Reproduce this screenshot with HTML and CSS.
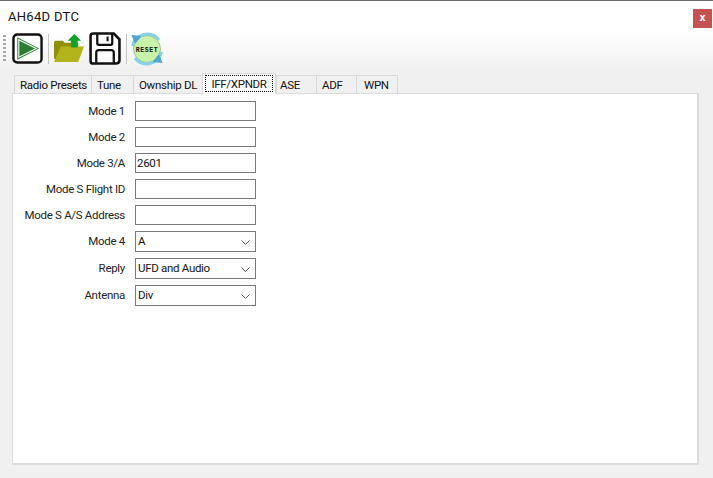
FILE: index.html
```html
<!DOCTYPE html>
<html lang="en">
<head>
<meta charset="utf-8">
<title>AH64D DTC</title>
<link rel="stylesheet" href="styles.css">
</head>
<body>
<div class="window">
  <header class="titlebar">
    <span class="title">AH64D DTC</span>
    <button class="close">x</button>
  </header>
  <div class="toolbar">
    <span class="grip"></span>
    <svg class="icon play" viewBox="0 0 32 32">
      <rect x="1.5" y="1.5" width="29" height="29" rx="4" fill="#fff" stroke="#111" stroke-width="2.5"/>
      <path d="M5.5 4.5 L28 16 L5.5 27.5 Z" fill="#2c7d32"/>
      <path d="M7 7 L25 16 L7 25 Z" fill="none" stroke="#fff" stroke-width="1.1"/>
      <path d="M9 10 L21 16 L9 22 Z" fill="#2c7d32"/>
    </svg>
    <span class="sep"></span>
    <svg class="icon folder" viewBox="0 0 34 32">
      <path d="M2 10 Q2 8 4 8 H11 L13 10 H27 V28 H4 L2 26 Z" fill="#8f8f0c"/>
      <path d="M9 14 H33 L27 30 H2 Z" fill="#b3b31c"/>
      <path d="M23 1 L30 8 H26.5 V15 H19.5 V8 H16 Z" fill="#10a32a"/>
    </svg>
    <svg class="icon floppy" viewBox="0 0 32 32">
      <path d="M2.5 4 Q2.5 1.5 5 1.5 H25 L30.5 7 V27.5 Q30.5 30.5 27.5 30.5 H5 Q2.5 30.5 2.5 28 Z" fill="#fff" stroke="#111" stroke-width="2.5"/>
      <path d="M9 2 V11 Q9 12.5 10.5 12.5 H22 Q23.500 12.500 23.500 11 V2" fill="none" stroke="#111" stroke-width="2.2"/>
      <path d="M19 4.500 V9" stroke="#111" stroke-width="2"/>
      <path d="M8 30 V20 Q8 17.500 10.500 17.500 H22.500 Q25 17.500 25 20 V30" fill="none" stroke="#111" stroke-width="2.2"/>
    </svg>
    <span class="sep sep2"></span>
    <svg class="icon reset" viewBox="0 0 34 34">
      <circle cx="17" cy="17" r="13.500" fill="#c8f2a8" stroke="#6f9f6a" stroke-width=".6"/>
      <path d="M2.500 14 A15 15 0 0 1 29 8" fill="none" stroke="#86d0ea" stroke-width="3"/>
      <path d="M31.500 20 A15 15 0 0 1 5 26" fill="none" stroke="#86d0ea" stroke-width="3"/>
      <path d="M1.500 3 L11.500 4 L5 12 Z" fill="#4fa6cc"/>
      <path d="M32.500 31 L22.500 30 L29 22 Z" fill="#4fa6cc"/>
      <text x="17" y="19.500" text-anchor="middle" class="reset-text">RESET</text>
    </svg>
  </div>
  <nav class="tabs">
    <span class="tab w-radio">Radio Presets</span>
    <span class="tab w-tune">Tune</span>
    <span class="tab w-own">Ownship DL</span>
    <span class="tab active"><span class="focus">IFF/XPNDR</span></span>
    <span class="tab w-ase">ASE</span>
    <span class="tab w-adf">ADF</span>
    <span class="tab w-wpn">WPN</span>
  </nav>
  <main class="panel">
    <form class="form">
      <label class="label">Mode 1</label><div class="field text">&nbsp;</div>
      <label class="label">Mode 2</label><div class="field text">&nbsp;</div>
      <label class="label">Mode 3/A</label><div class="field text">2601</div>
      <label class="label">Mode S Flight ID</label><div class="field text">&nbsp;</div>
      <label class="label">Mode S A/S Address</label><div class="field text">&nbsp;</div>
      <label class="label">Mode 4</label>
      <div class="field select">A<svg class="chev" viewBox="0 0 9 5"><path d="M.5 .5 L4.500 4.500 L8.500 .5" fill="none" stroke="#555"/></svg></div>
      <label class="label">Reply</label>
      <div class="field select">UFD and Audio<svg class="chev" viewBox="0 0 9 5"><path d="M.5 .5 L4.500 4.500 L8.500 .5" fill="none" stroke="#555"/></svg></div>
      <label class="label">Antenna</label>
      <div class="field select">Div<svg class="chev" viewBox="0 0 9 5"><path d="M.5 .5 L4.500 4.500 L8.500 .5" fill="none" stroke="#555"/></svg></div>
    </form>
  </main>
</div>
</body>
</html>
```
FILE: styles.css
```css
* { box-sizing: border-box; }
html, body { margin: 0; padding: 0; }
body {
  width: 713px;
  height: 478px;
  overflow: hidden;
  background: #f0f0f0;
  font-family: Roboto, "Noto Sans", sans-serif;
  font-size: 11.5px;
  letter-spacing: -.3px;
  color: #000;
}
.window { display: flex; flex-direction: column; height: 478px; border-top: 1px solid #6a6a6a; }
.titlebar {
  display: flex;
  align-items: center;
  justify-content: space-between;
  height: 30px;
  padding: 0 1px 0 8px;
  background: #fff;
}
.title { font-size: 13px; letter-spacing: .3px; color: #111; }
.close {
  width: 19px;
  height: 19px;
  margin-top: 5px;
  padding: 0 0 3px;
  border: 0;
  background: #c75050;
  color: #fff;
  font: bold 11px "DejaVu Sans Mono", monospace;
}
.toolbar {
  display: flex;
  align-items: center;
  height: 39px;
  padding: 0 0 4px 3px;
  background: linear-gradient(#fff, #f0f0f0);
}
.grip { width: 3px; height: 27px; margin-right: 6px; background: repeating-linear-gradient(#a8a8a8 0 2px, transparent 2px 4px); }
.icon { display: block; flex: none; }
.play { width: 31px; height: 31px; }
.sep { width: 1px; height: 30px; margin: 0 3px 0 5px; background: #c4c4c4; }
.folder { width: 33px; height: 31px; }
.floppy { width: 33px; height: 33px; margin-left: 3px; }
.sep2 { margin: 0 3px 0 5px; }
.reset { width: 34px; height: 34px; }
.reset-text { font: bold 6.500px "Liberation Mono", monospace; letter-spacing: .6px; fill: #111; }
.tabs { display: flex; align-items: flex-end; height: 23px; padding-left: 14px; }
.tab {
  display: flex;
  align-items: center;
  height: 18px;
  margin-left: -1px;
  padding-left: 5px;
  border: 1px solid #d9d9d9;
  border-bottom: 0;
  background: #f0f0f0;
  color: #111;
}
.tab:first-child { margin-left: 0; }
.w-radio { width: 78px; }
.w-tune { width: 43px; }
.w-own { width: 71px; }
.w-ase { width: 41px; margin-left: 0; padding-left: 3px; }
.w-adf { width: 41px; }
.w-wpn { width: 42px; padding-left: 7px; }
.active {
  position: relative;
  z-index: 1;
  width: 74px;
  height: 21px;
  margin-bottom: -1px;
  margin-left: -2px;
  padding: 1px 2px 2px;
  background: #fff;
}
.focus {
  display: flex;
  flex: 1;
  align-self: stretch;
  align-items: center;
  justify-content: center;
  border: 1px dotted #000;
}
.panel {
  flex: none;
  width: 687px;
  height: 372px;
  margin-left: 12px;
  padding: 7px 0 0 12px;
  background: #fff;
  border: 1px solid #dcdcdc;
  border-right-width: 2px;
  border-bottom-width: 2px;
}
.form {
  display: grid;
  grid-template-columns: 100px 121px;
  grid-template-rows: repeat(5, 20px) repeat(3, 21px);
  column-gap: 10px;
  row-gap: 6px;
}
.label { display: flex; align-items: center; justify-content: flex-end; white-space: nowrap; color: #222; padding-bottom: 1px; }
.field {
  display: flex;
  align-items: center;
  padding: 0 0 1px 2px;
  background: #fff;
  border: 1px solid #7a7a7a;
  color: #111;
}
.text { padding-left: 1px; }
.select { position: relative; }
.chev { position: absolute; right: 5px; top: 8px; width: 9px; height: 5px; }
```
